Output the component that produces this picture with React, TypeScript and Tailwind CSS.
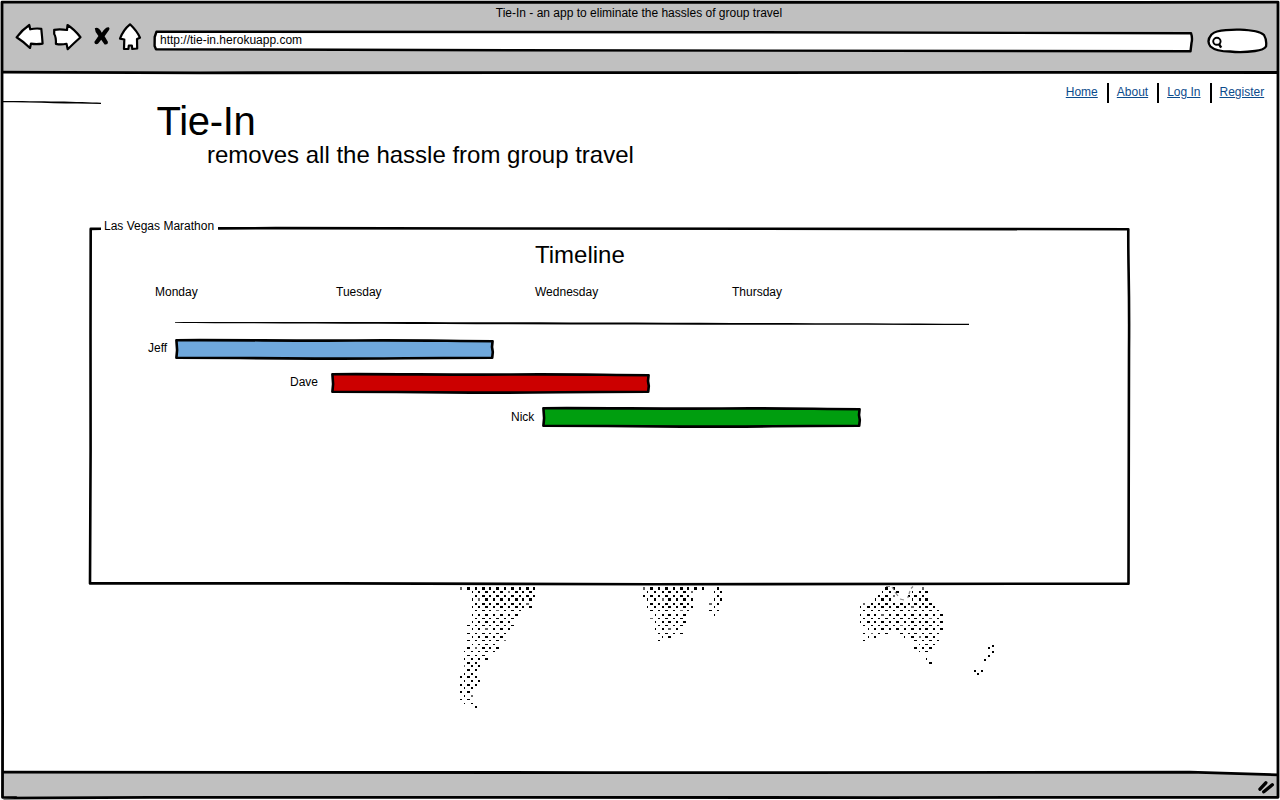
import React from "react";

type Span = [number, number];

// Each entry is one dotted row: inclusive column ranges, stepping by two.
const southAmerica: Span[][] = [
  [[0, 20]], [[3, 19]], [[4, 20]], [[3, 19]], [[4, 18]], [[3, 19]], [[4, 16]], [[3, 15]], [[4, 14]],
  [[3, 13]], [[2, 14]], [[3, 13]], [[2, 12]], [[3, 11]], [[2, 12]], [[3, 9]], [[2, 10]], [[1, 9]],
  [[2, 6]], [[1, 7]], [[2, 4]], [[1, 5]], [[2, 4]], [[1, 3]], [[0, 4]], [[1, 5]], [[0, 4]], [[1, 3]],
  [[0, 2]], [[1, 3]], [[0, 2]], [[1, 3]], [[4, 4]],
];
const africa: Span[][] = [
  [[0, 16], [20, 20]], [[1, 13], [19, 21]], [[0, 12], [20, 20]], [[1, 13], [19, 21]], [[2, 12], [18, 20]],
  [[1, 13], [19, 19]], [[2, 12], [18, 20]], [[3, 11], [19, 19]], [[2, 10]], [[3, 11]], [[4, 10]],
  [[3, 9]], [[4, 10]], [[5, 7]], [[4, 4]],
];
const australia: Span[][] = [
  [[7, 9], [17, 17]], [[6, 10], [14, 18]], [[5, 9], [13, 17]], [[4, 8], [14, 18]], [[1, 19]], [[0, 20]],
  [[1, 21]], [[0, 22]], [[1, 21]], [[0, 22]], [[1, 21]], [[2, 22]], [[1, 7], [11, 21]],
  [[2, 4], [12, 20]], [[1, 1], [15, 21]], [[16, 20]], [[15, 19]], [[16, 18]], [], [[18, 18]], [[19, 19]],
];
const rowHeights = [3, 2, 2, 3, 2, 2, 1, 2, 1, 2, 1, 2, 1, 2, 1, 1, 2, 1, 1, 2, 2, 2, 2, 2, 2, 2, 2, 2, 2, 2, 1, 1, 2];
const newZealand: Span[] = [[992, 645], [988, 647], [992, 651], [988, 655], [984, 659], [974, 670], [981, 670], [977, 673]];

function Landmass({ rows, x, y }: { rows: Span[][]; x: number; y: number }) {
  const dots: React.ReactNode[] = [];
  rows.forEach((spans, r) =>
    spans.forEach(([from, to]) => {
      for (let k = from; k <= to; k += 2) {
        const edge = k === from && r % 2 === 1;
        const w = edge ? 1 : k % 4 === 2 || (k > 6 && k % 4 === 3) ? 3 : 2;
        const h = rowHeights[r];
        dots.push(
          <rect
            key={`${r}-${k}`}
            x={Math.round(x + k * 3.67 - w / 2)}
            y={Math.round(y + r * 3.69 - h / 2)}
            width={w}
            height={h}
            opacity={(k * 5 + r * 3) % 17 === 0 ? 0.6 : 1}
          />
        );
      }
    })
  );
  return <g>{dots}</g>;
}

function WorldMap() {
  return (
    <svg className="ml-[450px] block h-[130px] w-[560px] shrink-0" viewBox="450 585 560 130">
      <g shapeRendering="crispEdges">
        <Landmass rows={southAmerica} x={461} y={588.8} />
        <Landmass rows={africa} x={644.3} y={588.8} />
        <Landmass rows={australia} x={860.8} y={588.8} />
        {newZealand.map(([x, y]) => (
          <rect key={`${x}-${y}`} x={x} y={y} width="2" height="2" />
        ))}
      </g>
      <path d="M886 586.5h4M892 587l2 3M895 592l3 4M900 599l4 1M913 586.5l-2 2M910 591l-1 3M908 596v2" fill="none" stroke="#888" strokeWidth="1.2" />
    </svg>
  );
}

function SketchBar({ fill }: { fill: string }) {
  return (
    <svg className="block h-[22px] w-[320px] shrink-0" viewBox="0 0 320 22">
      <path
        d="M1.4 2.2C60 1.8 120 3 180 2.5S270 3 317.6 3.2L317 9 317.8 14 317.2 19.8C250 19.8 190 21 140 20.6S50 19.7 1.4 19.7L2.1 12Z"
        fill={fill}
        stroke="#000"
        strokeWidth="2.6"
        strokeLinejoin="round"
      />
    </svg>
  );
}

function TopBar() {
  return (
    <header className="flex h-[73px] shrink-0 flex-col bg-[#c0c0c0]">
      <div className="pt-[5px] pr-[2px] text-center">Tie-In - an app to eliminate the hassles of group travel</div>
      <div className="mt-px flex h-[32px] pl-[14px]">
        <svg className="h-[32px] w-[32px]" viewBox="14 22 32 32" fill="#fff" stroke="#000" strokeWidth="2.2" strokeLinejoin="round">
          <path d="M16.6 37.3Q22 30 29.3 25L30.2 29.3Q36 28 41.3 28.8L42 36 42.6 43.6Q36 44.6 31 43.6L30 48Q24 42 16.6 37.3Z" />
        </svg>
        <svg className="ml-[6px] h-[32px] w-[32px]" viewBox="52 22 32 32" fill="#fff" stroke="#000" strokeWidth="2.2" strokeLinejoin="round">
          <path d="M54.2 29.8Q60 28.8 67 30L67.5 25Q74 29 80.5 37.2 74 43 67.7 49.2L66.5 43.8Q61 45 55.9 43.9 56.2 37 54.2 34Z" />
        </svg>
        <svg className="ml-[8px] h-[32px] w-[20px]" viewBox="92 22 20 32">
          <path d="M94.8 28.2Q98.5 26.2 101.8 32.8 105 27 108.8 27.2 110 28 109.2 29.8L104.6 36.2 108 42Q108 45 104.6 44.4L101.2 39.8 98 43.8Q94.8 45.2 94.3 42L98.4 36Q94.8 32 94.8 28.2Z" />
        </svg>
        <svg className="ml-[5px] h-[32px] w-[26px]" viewBox="117 22 26 32" fill="#fff" stroke="#000" strokeWidth="2.2" strokeLinejoin="round">
          <path d="M130 24.3Q137 31 140 37.7L137 39 137.2 48.5 132.3 49 131.8 45.5 128.8 45.5 128.4 49 124 49 124.3 39.5 120 38.7Q123 30 130 24.3Z" />
        </svg>
        <div className="relative ml-[9px] h-[32px] w-[1043px] pt-[10px] pl-[8px]">
          <svg className="absolute inset-0 h-[32px] w-[1043px]" viewBox="152 22 1043 32">
            <path d="M156.5 31.7C400 31.3 900 32.6 1191 33.2Q1192.7 38 1191.5 43L1190.5 51.3C900 51.3 500 50.2 156 49.3L154.6 46 154.7 37Z" fill="#fff" stroke="#000" strokeWidth="2.4" strokeLinejoin="round" />
          </svg>
          <span className="relative">http://tie-in.herokuapp.com</span>
        </div>
        <svg className="ml-[10px] h-[32px] w-[64px]" viewBox="1205 22 64 32" stroke="#000">
          <path d="M1217 31.5Q1226 29.3 1240 29.6 1259 30.3 1264 35 1267 40 1266 46.5 1264 50 1255 51 1242 52.8 1230 51.5 1216 51.5 1210.5 46.5 1206 41 1211.5 34.5 1214 32.2 1217 31.5Z" fill="#fff" strokeWidth="2.3" />
          <ellipse cx="1216.9" cy="41.3" rx="3.7" ry="3.5" fill="none" strokeWidth="1.9" />
          <path d="M1218.8 43.8L1221.2 47.6" fill="none" strokeWidth="2.4" />
        </svg>
      </div>
    </header>
  );
}

const links = ["Home", "About", "Log In", "Register"];

const rows = [
  { name: "Jeff", fill: "#6fa8dc", pad: "pl-[58px]", label: "mt-[2px] w-[27px]" },
  { name: "Dave", fill: "#cc0000", pad: "pl-[200px]", label: "mt-[2px] w-[41px]" },
  { name: "Nick", fill: "#009e0f", pad: "pl-[421px]", label: "mt-[3px] w-[31px]" },
];

function TimelinePanel() {
  return (
    <section className="relative ml-[90px] h-[366px] w-[1040px] shrink-0">
      <svg className="absolute inset-0 h-[366px] w-[1040px] overflow-visible" viewBox="90 219 1040 366" fill="none" stroke="#000">
        <path d="M101 228.8L90.7 228.9C90 300 91 380 90.6 450S90 560 90 583.4C300 582.9 420 583.8 650 584.2S1000 583.3 1128.5 583.8C1129.3 500 1128.4 420 1129 350S1128 270 1128.3 229.2C900 229 700 229.4 500 228.5S300 228.2 218 228.4" strokeWidth="2.6" strokeLinejoin="round" />
        <path d="M175 322.2C350 321.6 700 322.8 969 323.8V325C700 325 400 324.2 175 322.9Z" fill="#000" stroke="none" />
      </svg>
      <h3 className="relative -mt-px pl-[14px]">Las Vegas Marathon</h3>
      <h2 className="relative mt-[7px] pl-[445px] text-[24px] leading-[28px]">Timeline</h2>
      <div className="relative mt-[15px] flex pl-[65px]">
        <span className="w-[181px]">Monday</span>
        <span className="w-[199px]">Tuesday</span>
        <span className="w-[197px]">Wednesday</span>
        <span>Thursday</span>
      </div>
      <div className="relative mt-[38px] flex flex-col gap-[12px]">
        {rows.map((row) => (
          <div key={row.name} className={`flex h-[22px] ${row.pad}`}>
            <span className={`shrink-0 ${row.label}`}>{row.name}</span>
            <SketchBar fill={row.fill} />
          </div>
        ))}
      </div>
    </section>
  );
}

export default function App() {
  return (
    <div className="relative flex h-[800px] w-[1280px] flex-col overflow-hidden bg-white font-['Liberation_Sans',Arial,sans-serif] text-[12px] leading-[16px] text-black">
      <TopBar />
      <main className="flex h-[699px] shrink-0 flex-col">
        <nav className="flex h-[30px] justify-end pt-[10px] pr-[15.8px]">
          {links.map((label, i) => (
            <React.Fragment key={label}>
              {i > 0 && <span className="mr-[8px] ml-[9px] h-[20px] w-[2px] bg-black" />}
              <a className="mt-px text-[#0b4b8c] underline underline-offset-1">{label}</a>
            </React.Fragment>
          ))}
        </nav>
        <div className="flex h-[116px] shrink-0">
          <svg className="-mt-[4px] h-[8px] w-[104px]" viewBox="0 99 104 8">
            <path d="M0 100.9C40 100.9 80 101.6 101 102.7V104C70 103.8 40 102.6 0 102.3Z" />
          </svg>
          <div className="-mt-[5px] pl-[52.5px]">
            <h1 className="text-[40px] leading-[46px] tracking-[-0.3px]">Tie-In</h1>
            <p className="-mt-[3px] pl-[50.5px] text-[24px] leading-[28px] whitespace-nowrap">removes all the hassle from group travel</p>
          </div>
        </div>
        <TimelinePanel />
        <WorldMap />
      </main>
      <footer className="flex h-[28px] shrink-0 justify-end bg-[#c0c0c0] pr-[4px] pt-[7px]">
        <svg className="h-[16px] w-[20px]" viewBox="1256 779 20 16" stroke="#000" strokeWidth="3.4" strokeLinecap="round">
          <path d="M1260 789.2L1265.8 782.8M1263.8 791.8L1272.3 784.8" />
        </svg>
      </footer>
      <svg className="pointer-events-none absolute inset-0 h-[800px] w-[1280px]" viewBox="0 0 1280 800" fill="none" stroke="#000" strokeWidth="2.8">
        <path d="M0 0H1280V800H0ZM2.5 2V797H1278V2Z" fill="#fff" fillRule="evenodd" stroke="none" />
        <path d="M1190 772.2L1278 774.8V771H1190Z" fill="#fff" stroke="none" />
        <path d="M2 2.2C300 1.5 800 2.7 1278 2.2 1277 200 1278.6 300 1277.7 450S1278.6 700 1278 797.3C900 798.5 400 796 150 797.3S60 798 2.5 797.3C3.2 700 1.5 650 2.1 500S1.5 200 2 2.2Z" strokeLinejoin="round" />
        <path d="M2 72.2L200 72.8C500 73.4 900 72 1278 72.5" />
        <path d="M2 772.1C200 773 400 772.3 600 772.6S1050 771.8 1190 772.2L1278 774.8" />
      </svg>
    </div>
  );
}
